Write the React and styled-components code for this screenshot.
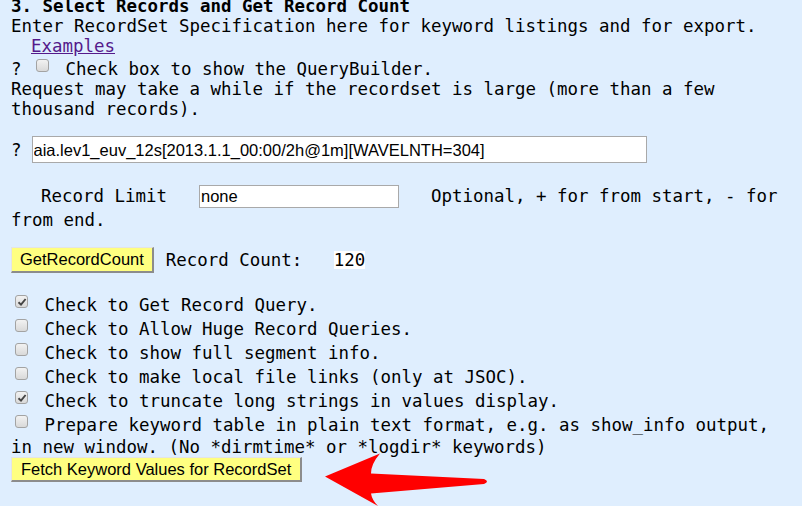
import React from "react";
import styled, { createGlobalStyle } from "styled-components";

const Global = createGlobalStyle`
  html, body { margin: 0; padding: 0; background: #dfeefe; overflow: hidden; }
  body { width: 802px; height: 506px; }
`;

const Page = styled.div`
  position: relative;
  margin-top: -4px;
  padding: 0 11px 0 11px;
  font-family: "DejaVu Sans Mono", monospace;
  font-size: 17.44px;
  line-height: 20px;
  color: #000;
`;

const Title = styled.div`
  font-weight: bold;
`;

const Line = styled.div`
  white-space: pre-wrap;
`;

const Indent = styled.div`
  padding-left: 20px;
`;

const Link = styled.a`
  color: #551a8b;
  text-decoration: underline;
  cursor: pointer;
`;

const Box = styled.span`
  display: inline-block;
  box-sizing: border-box;
  width: 13px;
  height: 13px;
  margin: 3px 6px 3px 4px;
  border: 1px solid #a3a3a3;
  border-radius: 3px;
  background: linear-gradient(#f2f2f2, #d9d9d9);
  position: relative;
  vertical-align: baseline;
`;

const Tick = styled.svg`
  position: absolute;
  left: 1px;
  top: 1px;
  width: 10px;
  height: 10px;
`;

const Checkbox = ({ checked }) => (
  <Box>
    {checked && (
      <Tick viewBox="0 0 10 10">
        <path d="M1.5 5.2 L4 7.6 L8.6 2" fill="none" stroke="#444" strokeWidth="1.9" />
      </Tick>
    )}
  </Box>
);

const SpecRow = styled.div`
  display: flex;
  align-items: center;
  height: 27px;
  margin-top: 17px;
  gap: 10px;
`;

const TextField = styled.input`
  box-sizing: border-box;
  width: ${(p) => p.$w}px;
  height: ${(p) => p.$h}px;
  margin: 0;
  padding: 1px 2px 0 1px;
  border: 1px solid #a9a9a9;
  background: #fff;
  font-family: "Liberation Sans", Arial, sans-serif;
  font-size: 16.5px;
  color: #000;
  outline: none;
`;

const LimitRow = styled.div`
  margin-top: 21px;
  padding-left: 30px;
  line-height: 24px;
  white-space: pre-wrap;
  text-indent: 0;
`;

const LimitWrap = styled.div`
  margin-left: -30px;
`;

const LimitLabel = styled.span`
  margin-left: 30px;
  margin-right: 32px;
`;

const InlineField = styled(TextField)`
  vertical-align: baseline;
  margin-right: 32px;
`;

const CountRow = styled.div`
  display: flex;
  align-items: center;
  margin-top: 15px;
`;

const Button = styled.button`
  box-sizing: border-box;
  height: ${(p) => p.$h}px;
  margin: 0;
  padding: 0 ${(p) => p.$px || 8}px;
  background: #ffff80;
  border-style: solid;
  border-width: 1px 2px 2px 1px;
  border-color: #e4e4e4 #8c8c8c #8c8c8c #e4e4e4;
  font-family: "Liberation Sans", Arial, sans-serif;
  font-size: 16.5px;
  color: #000;
  cursor: pointer;
`;

const CountLabel = styled.span`
  margin-left: 12px;
  white-space: pre;
`;

const CountValue = styled.span`
  background: #fff;
  line-height: 18px;
`;

const CheckList = styled.div`
  margin-top: 19px;
`;

const CheckRow = styled.div`
  line-height: 22px;
  white-space: pre-wrap;
`;

const FetchRow = styled.div`
  margin-top: -1px;
`;

const Arrow = styled.svg`
  position: absolute;
  left: 320px;
  top: 454px;
  width: 175px;
  height: 60px;
`;

const checks = [
  [true, "Check to Get Record Query."],
  [false, "Check to Allow Huge Record Queries."],
  [false, "Check to show full segment info."],
  [false, "Check to make local file links (only at JSOC)."],
  [true, "Check to truncate long strings in values display."],
  [
    false,
    "Prepare keyword table in plain text format, e.g. as show_info output, in new window. (No *dirmtime* or *logdir* keywords)",
  ],
];

export default function App() {
  return (
    <>
      <Global />
      <Page>
        <Title>3. Select Records and Get Record Count</Title>
        <Line>Enter RecordSet Specification here for keyword listings and for export.</Line>
        <Indent>
          <Link>Examples</Link>
        </Indent>
        <Line>
          {"? "}
          <Checkbox />
          {" Check box to show the QueryBuilder."}
        </Line>
        <Line>
          Request may take a while if the recordset is large (more than a few thousand records).
        </Line>
        <SpecRow>
          <span>?</span>
          <TextField
            $w={615}
            $h={27}
            defaultValue="aia.lev1_euv_12s[2013.1.1_00:00/2h@1m][WAVELNTH=304]"
          />
        </SpecRow>
        <LimitRow>
          <LimitWrap>
            <LimitLabel>Record Limit</LimitLabel>
            <InlineField $w={200} $h={23} defaultValue="none" />
            Optional, + for from start, - for from end.
          </LimitWrap>
        </LimitRow>
        <CountRow>
          <Button $h={26}>GetRecordCount</Button>
          <CountLabel>{"Record Count:   "}</CountLabel>
          <CountValue>120</CountValue>
        </CountRow>
        <CheckList>
          {checks.map(([c, t], i) => (
            <CheckRow key={i}>
              <Checkbox checked={c} />
              {" " + t}
            </CheckRow>
          ))}
        </CheckList>
        <FetchRow>
          <Button $h={25} $px={9}>Fetch Keyword Values for RecordSet</Button>
        </FetchRow>
        <Arrow viewBox="320 450 175 60">
          <path
            d="M325 476.5 L380 453.5 Q371 464 371 473.5 L484 479 Q490 481.5 484 484 L371 493.5 Q372 500 378 506 Z"
            fill="#ff0000"
          />
        </Arrow>
      </Page>
    </>
  );
}
